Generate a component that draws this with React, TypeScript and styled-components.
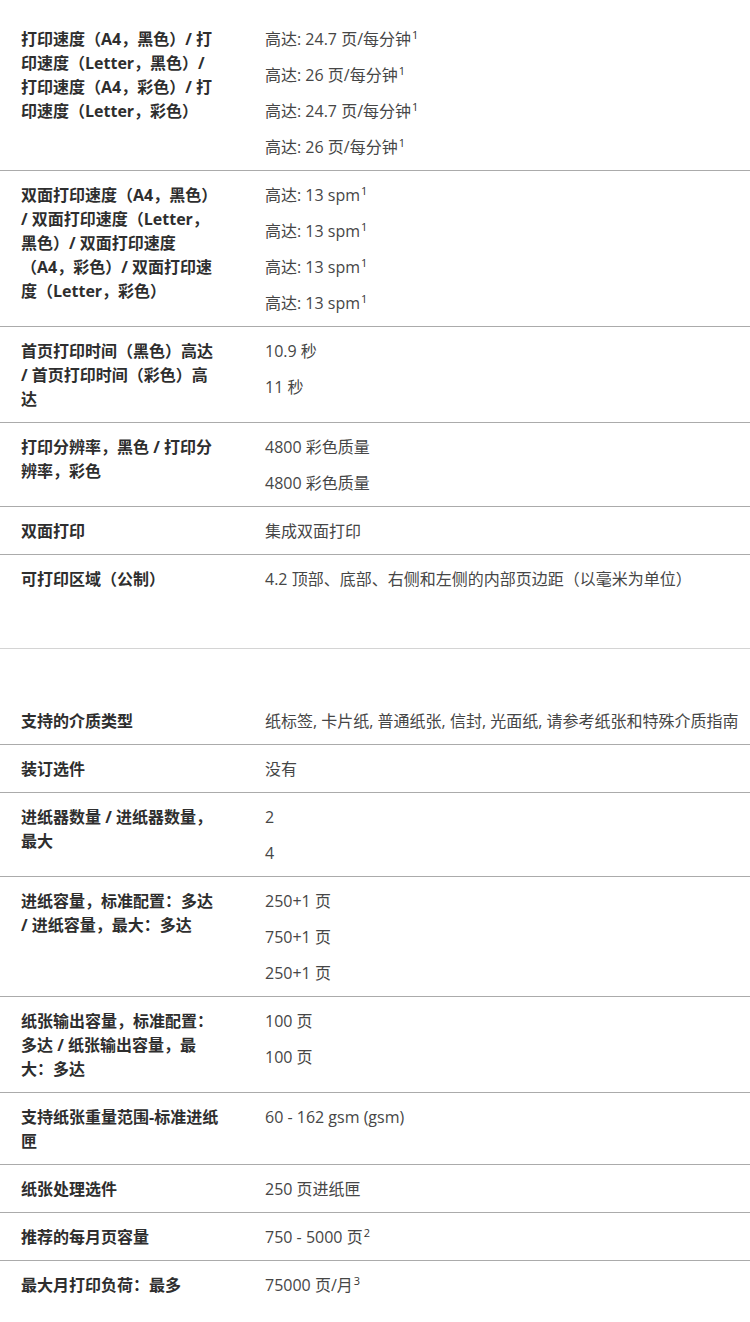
import React from 'react';
import styled, { createGlobalStyle } from 'styled-components';

const GlobalStyle = createGlobalStyle`
  html, body {
    margin: 0;
    padding: 0;
    background: #ffffff;
  }
  body {
    font-family: "Open Sans", "Noto Sans CJK SC", sans-serif;
  }
`;

const Page = styled.div`
  width: 750px;
  padding-top: 15px;
`;

const Section = styled.section`
  padding-bottom: 46px;

  & + & {
    border-top: 1px solid #d4d4d4;
    padding-top: 48px;
  }
`;

const Row = styled.div`
  display: grid;
  grid-template-columns: 204px 1fr;
  column-gap: 40px;
  padding: 12px 0 11px 21px;
  border-bottom: 1px solid #ababab;

  &:last-child {
    border-bottom: none;
  }
`;

const Label = styled.div`
  font-size: 16px;
  line-height: 24px;
  font-weight: 700;
  color: #2e2e2e;
  white-space: pre;
`;

const Values = styled.div`
  display: flex;
  flex-direction: column;
  gap: 12px;
`;

const Value = styled.div`
  font-size: 16px;
  line-height: 24px;
  color: #464646;
  white-space: nowrap;
`;

const Note = styled.sup`
  font-size: 11px;
  line-height: 0;
  position: relative;
  top: -0.55em;
  vertical-align: baseline;
  margin-left: 1px;
  color: #333333;
`;

interface SpecValue {
  text: string;
  note?: number;
}

interface Spec {
  label: string;
  values: SpecValue[];
}

const v = (text: string, note?: number): SpecValue => ({ text, note });

const printSpecs: Spec[] = [
  {
    label: '打印速度（A4，黑色）/ 打\n印速度（Letter，黑色）/\n打印速度（A4，彩色）/ 打\n印速度（Letter，彩色）',
    values: [v('高达: 24.7 页/每分钟', 1), v('高达: 26 页/每分钟', 1), v('高达: 24.7 页/每分钟', 1), v('高达: 26 页/每分钟', 1)],
  },
  {
    label: '双面打印速度（A4，黑色）\n/ 双面打印速度（Letter，\n黑色）/ 双面打印速度\n（A4，彩色）/ 双面打印速\n度（Letter，彩色）',
    values: [v('高达: 13 spm', 1), v('高达: 13 spm', 1), v('高达: 13 spm', 1), v('高达: 13 spm', 1)],
  },
  {
    label: '首页打印时间（黑色）高达\n/ 首页打印时间（彩色）高\n达',
    values: [v('10.9 秒'), v('11 秒')],
  },
  {
    label: '打印分辨率，黑色 / 打印分\n辨率，彩色',
    values: [v('4800 彩色质量'), v('4800 彩色质量')],
  },
  { label: '双面打印', values: [v('集成双面打印')] },
  { label: '可打印区域（公制）', values: [v('4.2 顶部、底部、右侧和左侧的内部页边距（以毫米为单位）')] },
];

const paperSpecs: Spec[] = [
  { label: '支持的介质类型', values: [v('纸标签, 卡片纸, 普通纸张, 信封, 光面纸, 请参考纸张和特殊介质指南')] },
  { label: '装订选件', values: [v('没有')] },
  { label: '进纸器数量 / 进纸器数量，\n最大', values: [v('2'), v('4')] },
  {
    label: '进纸容量，标准配置：多达\n/ 进纸容量，最大：多达',
    values: [v('250+1 页'), v('750+1 页'), v('250+1 页')],
  },
  {
    label: '纸张输出容量，标准配置：\n多达 / 纸张输出容量，最\n大：多达',
    values: [v('100 页'), v('100 页')],
  },
  { label: '支持纸张重量范围-标准进纸\n匣', values: [v('60 - 162 gsm (gsm)')] },
  { label: '纸张处理选件', values: [v('250 页进纸匣')] },
  { label: '推荐的每月页容量', values: [v('750 - 5000 页', 2)] },
  { label: '最大月打印负荷：最多', values: [v('75000 页/月', 3)] },
];

const SpecTable: React.FC<{ specs: Spec[] }> = ({ specs }) => (
  <Section>
    {specs.map((spec, i) => (
      <Row key={i}>
        <Label>{spec.label}</Label>
        <Values>
          {spec.values.map((val, j) => (
            <Value key={j}>
              {val.text}
              {val.note !== undefined && <Note>{val.note}</Note>}
            </Value>
          ))}
        </Values>
      </Row>
    ))}
  </Section>
);

const App: React.FC = () => (
  <>
    <GlobalStyle />
    <Page>
      <SpecTable specs={printSpecs} />
      <SpecTable specs={paperSpecs} />
    </Page>
  </>
);

export default App;
